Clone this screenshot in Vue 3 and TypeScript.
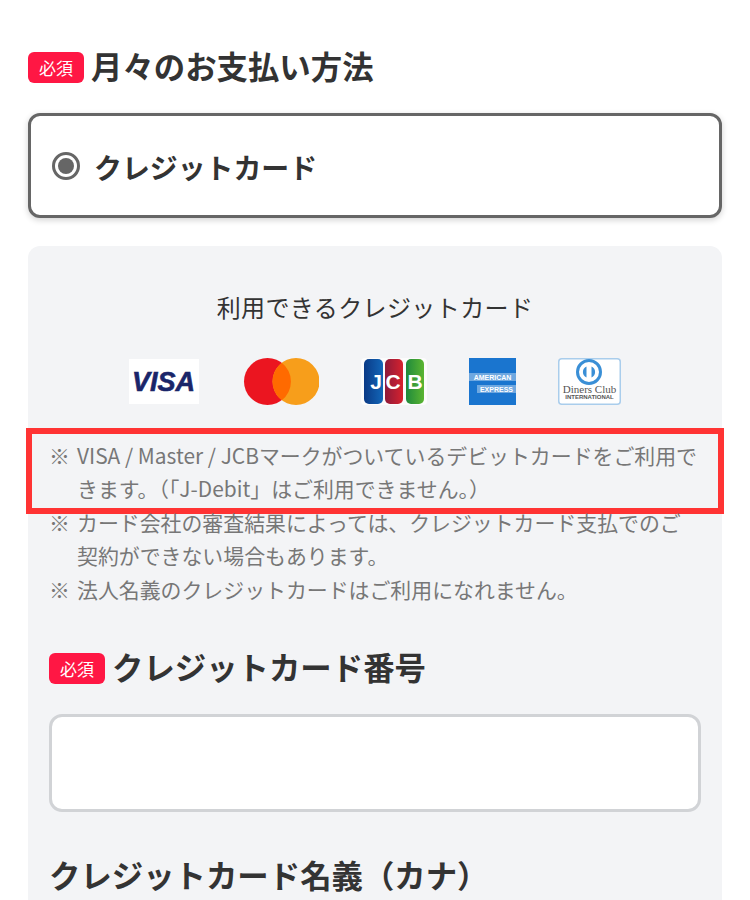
<script setup lang="ts">
const notes: string[] = [
  'VISA / Master / JCBマークがついているデビットカードをご利用できます。（「J-Debit」はご利用できません。）',
  'カード会社の審査結果によっては、クレジットカード支払でのご契約ができない場合もあります。',
  '法人名義のクレジットカードはご利用になれません。',
]
</script>

<template>
  <main class="page">
    <h2 class="heading top-heading"><span class="badge">必須</span>月々のお支払い方法</h2>

    <label class="radio-card">
      <span class="radio"><span class="radio-dot"></span></span>
      <span class="radio-label">クレジットカード</span>
    </label>

    <section class="panel">
      <p class="panel-title">利用できるクレジットカード</p>

      <div class="logos">
        <svg class="logo" width="70" height="45" viewBox="0 0 70 45">
          <rect width="70" height="45" fill="#fff" />
          <text x="34.5" y="32" text-anchor="middle" class="visa-text">VISA</text>
        </svg>
        <svg class="logo" width="78" height="47" viewBox="0 0 78 47">
          <circle cx="26.5" cy="23.5" r="23.5" fill="#eb1520" />
          <circle cx="55" cy="23.5" r="23.5" fill="#f79e1b" />
          <path d="M40.75 4.85a23.5 23.5 0 0 1 0 37.3a23.5 23.5 0 0 1 0-37.3z" fill="#ff6a00" />
        </svg>
        <svg class="logo" width="66" height="47" viewBox="0 0 66 47">
          <defs>
            <linearGradient id="jcbBlue" x1="0" x2="1" y1="0" y2="0">
              <stop offset="0" stop-color="#0a3a86" /><stop offset="1" stop-color="#1266b8" />
            </linearGradient>
            <linearGradient id="jcbRed" x1="0" x2="1" y1="0" y2="0">
              <stop offset="0" stop-color="#8e1a3a" /><stop offset="1" stop-color="#d6222e" />
            </linearGradient>
            <linearGradient id="jcbGreen" x1="0" x2="1" y1="0" y2="0">
              <stop offset="0" stop-color="#1f8a3c" /><stop offset="1" stop-color="#5bb531" />
            </linearGradient>
          </defs>
          <rect width="66" height="47" rx="4" fill="#fff" opacity="0.7" />
          <rect x="3" y="1" width="19" height="45" rx="5" fill="url(#jcbBlue)" />
          <rect x="24" y="1" width="18" height="45" rx="5" fill="url(#jcbRed)" />
          <rect x="45" y="1" width="18" height="45" rx="5" fill="url(#jcbGreen)" />
          <text x="15" y="31" text-anchor="middle" class="jcb-text">J</text>
          <text x="32" y="31" text-anchor="middle" class="jcb-text">C</text>
          <text x="54" y="31" text-anchor="middle" class="jcb-text">B</text>
        </svg>
        <svg class="logo" width="47" height="47" viewBox="0 0 47 47">
          <rect width="47" height="47" fill="#1a75cf" />
          <rect x="0" y="15" width="47" height="8" fill="#6fa8e0" />
          <rect x="8" y="27" width="39" height="8" fill="#6fa8e0" />
          <text x="23.5" y="21.5" text-anchor="middle" class="amex-text">AMERICAN</text>
          <text x="27.5" y="33.5" text-anchor="middle" class="amex-text">EXPRESS</text>
        </svg>
        <svg class="logo" width="63" height="47" viewBox="0 0 63 47">
          <rect x="0.75" y="0.75" width="61.5" height="45.5" rx="3" fill="#fff" stroke="#a9cdec" stroke-width="1.5" />
          <circle cx="31" cy="14" r="11.5" fill="#fff" stroke="#3a8fd6" stroke-width="3" />
          <path d="M28.5 8.5a6 6 0 0 0 0 11zM33.5 8.5a6 6 0 0 1 0 11z" fill="#3a8fd6" />
          <text x="31.5" y="35" text-anchor="middle" class="diners-text">Diners Club</text>
          <text x="31.5" y="41" text-anchor="middle" class="diners-small">INTERNATIONAL</text>
        </svg>
      </div>

      <ul class="notes">
        <li v-for="(note, i) in notes" :key="i" class="note">
          <span class="mark">※</span><span>{{ note }}</span>
          <span v-if="i === 0" class="highlight"></span>
        </li>
      </ul>

      <h2 class="heading field-heading"><span class="badge">必須</span>クレジットカード番号</h2>
      <input class="field" type="text" aria-label="クレジットカード番号" />

      <h2 class="heading name-heading">クレジットカード名義（カナ）</h2>
    </section>
  </main>
</template>

<style>
html, body { margin: 0; background: #fff; overflow: hidden; }
</style>

<style scoped>
.page {
  box-sizing: border-box;
  height: 900px;
  overflow: hidden;
  padding: 45px 28px 0;
  font-family: "Noto Sans CJK JP", "Noto Sans", sans-serif;
  color: #333;
  background: #fff;
}
.heading {
  display: flex;
  align-items: center;
  gap: 7px;
  margin: 0;
  font-size: 31.4px;
  line-height: 42px;
  font-weight: 700;
  color: #333;
}
.badge {
  flex: none;
  width: 56px;
  height: 31px;
  margin-top: 2px;
  border-radius: 6px;
  background: #ff1744;
  color: #fff;
  font-size: 17px;
  font-weight: 400;
  line-height: 31px;
  text-align: center;
}
.radio-card {
  box-sizing: border-box;
  display: flex;
  align-items: center;
  gap: 14px;
  height: 105px;
  margin-top: 26px;
  padding-left: 21px;
  background: #fff;
  border: 3px solid #666;
  border-radius: 12px;
  box-shadow: 0 2px 6px rgba(0, 0, 0, 0.18);
}
.radio {
  box-sizing: border-box;
  display: flex;
  align-items: center;
  justify-content: center;
  width: 28px;
  height: 28px;
  border: 3px solid #666;
  border-radius: 50%;
}
.radio-dot {
  width: 16px;
  height: 16px;
  border-radius: 50%;
  background: #666;
}
.radio-label {
  margin-top: 2px;
  font-size: 27.9px;
  font-weight: 700;
  line-height: 40px;
  color: #333;
}
.panel {
  margin-top: 28px;
  padding: 41px 21px 0;
  min-height: 700px;
  border-radius: 12px;
  background: #f3f4f6;
}
.panel-title {
  margin: 0;
  font-size: 24px;
  line-height: 40px;
  letter-spacing: 0.4px;
  text-align: center;
  color: #333;
}
.logos {
  display: flex;
  justify-content: center;
  align-items: center;
  gap: 42px;
  margin-top: 31px;
}
.logo { display: block; flex: none; }
.visa-text {
  font-family: "Liberation Sans", sans-serif;
  font-size: 27px;
  font-weight: 700;
  font-style: italic;
  fill: #1a2569;
  stroke: #1a2569;
  stroke-width: 0.6px;
}
.jcb-text {
  font-family: "Liberation Sans", sans-serif;
  font-size: 21px;
  font-weight: 700;
  fill: #fff;
}
.amex-text {
  font-family: "Liberation Sans", sans-serif;
  font-size: 7px;
  font-weight: 700;
  fill: #fff;
}
.diners-text {
  font-family: "Liberation Serif", serif;
  font-size: 11px;
  fill: #555;
}
.diners-small {
  font-family: "Liberation Sans", sans-serif;
  font-size: 6px;
  font-weight: 700;
  fill: #555;
}
.notes {
  list-style: none;
  margin: 33.6px 0 0;
  padding: 0;
  font-size: 20.9px;
  line-height: 33.5px;
  color: #777;
}
.note {
  position: relative;
  display: flex;
}
.mark {
  flex: none;
  width: 28px;
}
.highlight {
  position: absolute;
  top: -10.6px;
  left: -23px;
  right: -23px;
  height: 86px;
  box-sizing: border-box;
  border: 6.5px solid #ff3333;
  pointer-events: none;
}
.field-heading {
  margin-top: 40.4px;
}
.field {
  box-sizing: border-box;
  display: block;
  width: 100%;
  height: 98px;
  margin-top: 26px;
  background: #fff;
  border: 3px solid #d1d3d6;
  border-radius: 13px;
  outline: none;
}
.name-heading {
  margin-top: 42px;
}
</style>
